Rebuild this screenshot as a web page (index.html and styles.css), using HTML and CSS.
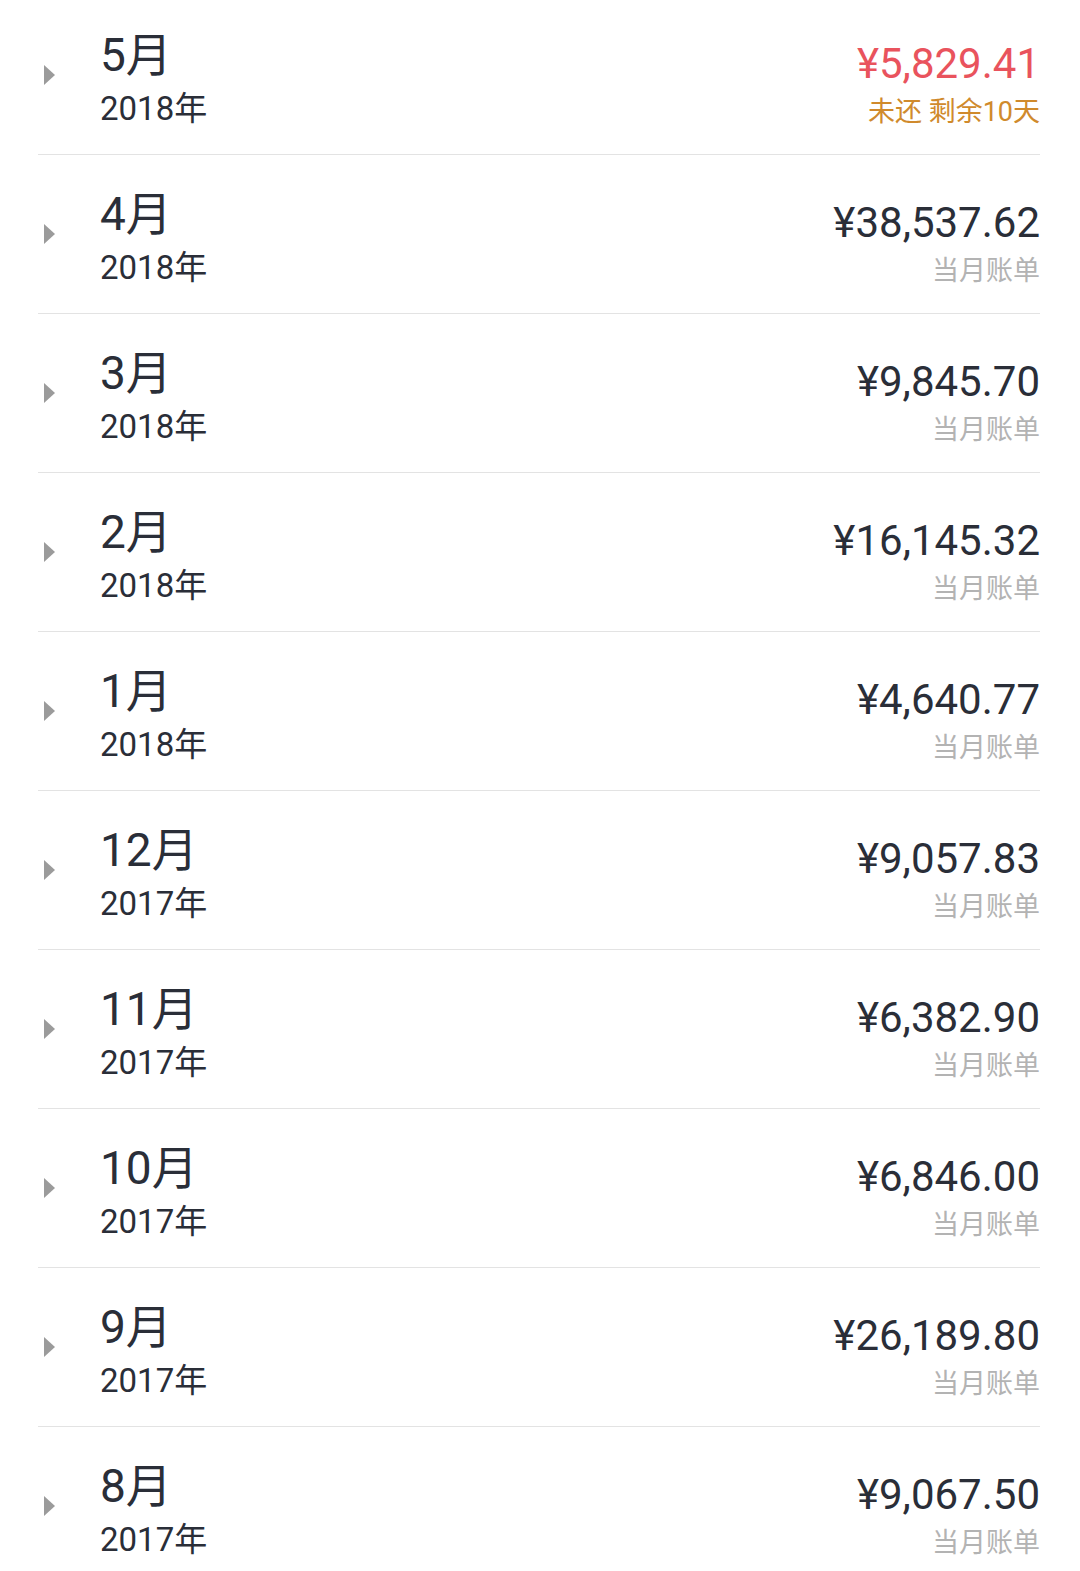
FILE: index.html
```html
<!DOCTYPE html>
<html lang="zh-CN">
<head>
    <meta charset="UTF-8">
    <meta name="viewport" content="width=device-width, initial-scale=1.0">
    <title>账单</title>
    <link rel="stylesheet" href="styles.css">
</head>
<body>
    <div class="bill-list">
        <div class="bill-row">
            <svg class="arrow" width="11" height="20" viewBox="0 0 11 20"><polygon points="0,0 11,10 0,20" /></svg>
            <div class="month-col">
                <p class="month">5月</p>
                <p class="year">2018年</p>
            </div>
            <div class="amount-col">
                <p class="amount unpaid">¥5,829.41</p>
                <p class="label due">未还 剩余10天</p>
            </div>
        </div>

        <div class="bill-row">
            <svg class="arrow" width="11" height="20" viewBox="0 0 11 20"><polygon points="0,0 11,10 0,20" /></svg>
            <div class="month-col">
                <p class="month">4月</p>
                <p class="year">2018年</p>
            </div>
            <div class="amount-col">
                <p class="amount">¥38,537.62</p>
                <p class="label">当月账单</p>
            </div>
        </div>

        <div class="bill-row">
            <svg class="arrow" width="11" height="20" viewBox="0 0 11 20"><polygon points="0,0 11,10 0,20" /></svg>
            <div class="month-col">
                <p class="month">3月</p>
                <p class="year">2018年</p>
            </div>
            <div class="amount-col">
                <p class="amount">¥9,845.70</p>
                <p class="label">当月账单</p>
            </div>
        </div>

        <div class="bill-row">
            <svg class="arrow" width="11" height="20" viewBox="0 0 11 20"><polygon points="0,0 11,10 0,20" /></svg>
            <div class="month-col">
                <p class="month">2月</p>
                <p class="year">2018年</p>
            </div>
            <div class="amount-col">
                <p class="amount">¥16,145.32</p>
                <p class="label">当月账单</p>
            </div>
        </div>

        <div class="bill-row">
            <svg class="arrow" width="11" height="20" viewBox="0 0 11 20"><polygon points="0,0 11,10 0,20" /></svg>
            <div class="month-col">
                <p class="month">1月</p>
                <p class="year">2018年</p>
            </div>
            <div class="amount-col">
                <p class="amount">¥4,640.77</p>
                <p class="label">当月账单</p>
            </div>
        </div>

        <div class="bill-row">
            <svg class="arrow" width="11" height="20" viewBox="0 0 11 20"><polygon points="0,0 11,10 0,20" /></svg>
            <div class="month-col">
                <p class="month">12月</p>
                <p class="year">2017年</p>
            </div>
            <div class="amount-col">
                <p class="amount">¥9,057.83</p>
                <p class="label">当月账单</p>
            </div>
        </div>

        <div class="bill-row">
            <svg class="arrow" width="11" height="20" viewBox="0 0 11 20"><polygon points="0,0 11,10 0,20" /></svg>
            <div class="month-col">
                <p class="month">11月</p>
                <p class="year">2017年</p>
            </div>
            <div class="amount-col">
                <p class="amount">¥6,382.90</p>
                <p class="label">当月账单</p>
            </div>
        </div>

        <div class="bill-row">
            <svg class="arrow" width="11" height="20" viewBox="0 0 11 20"><polygon points="0,0 11,10 0,20" /></svg>
            <div class="month-col">
                <p class="month">10月</p>
                <p class="year">2017年</p>
            </div>
            <div class="amount-col">
                <p class="amount">¥6,846.00</p>
                <p class="label">当月账单</p>
            </div>
        </div>

        <div class="bill-row">
            <svg class="arrow" width="11" height="20" viewBox="0 0 11 20"><polygon points="0,0 11,10 0,20" /></svg>
            <div class="month-col">
                <p class="month">9月</p>
                <p class="year">2017年</p>
            </div>
            <div class="amount-col">
                <p class="amount">¥26,189.80</p>
                <p class="label">当月账单</p>
            </div>
        </div>

        <div class="bill-row">
            <svg class="arrow" width="11" height="20" viewBox="0 0 11 20"><polygon points="0,0 11,10 0,20" /></svg>
            <div class="month-col">
                <p class="month">8月</p>
                <p class="year">2017年</p>
            </div>
            <div class="amount-col">
                <p class="amount">¥9,067.50</p>
                <p class="label">当月账单</p>
            </div>
        </div>
    </div>
</body>
</html>
```

FILE: styles.css
```css
body {
    font-family: Roboto, "Noto Sans CJK SC", sans-serif;
    background-color: #ffffff;
    color: #2a2e38;
    margin: 0;
    padding: 0;
    overflow: hidden;
}
p {
    margin: 0;
}
.bill-list {
    margin: -4px 40px 0 38px;
}
.bill-row {
    display: flex;
    align-items: flex-start;
    height: 158px;
    border-bottom: 1px solid #e3e3e3;
}
.arrow {
    align-self: center;
    margin-left: 6px;
    fill: #9b9b9b;
}
.month-col {
    margin-left: 45px;
    padding-top: 31px;
}
.month {
    font-size: 46px;
    line-height: 56px;
}
.year {
    font-size: 33px;
    line-height: 40px;
    margin-top: 6px;
}
.amount-col {
    margin-left: auto;
    padding-top: 43px;
    padding-right: 0;
    text-align: right;
}
.amount {
    font-size: 42px;
    line-height: 50px;
}
.amount.unpaid {
    color: #e9535d;
}
.label {
    font-size: 27px;
    line-height: 36px;
    margin-top: 5px;
    color: #b3b3b3;
}
.label.due {
    color: #d08a2c;
}
```
